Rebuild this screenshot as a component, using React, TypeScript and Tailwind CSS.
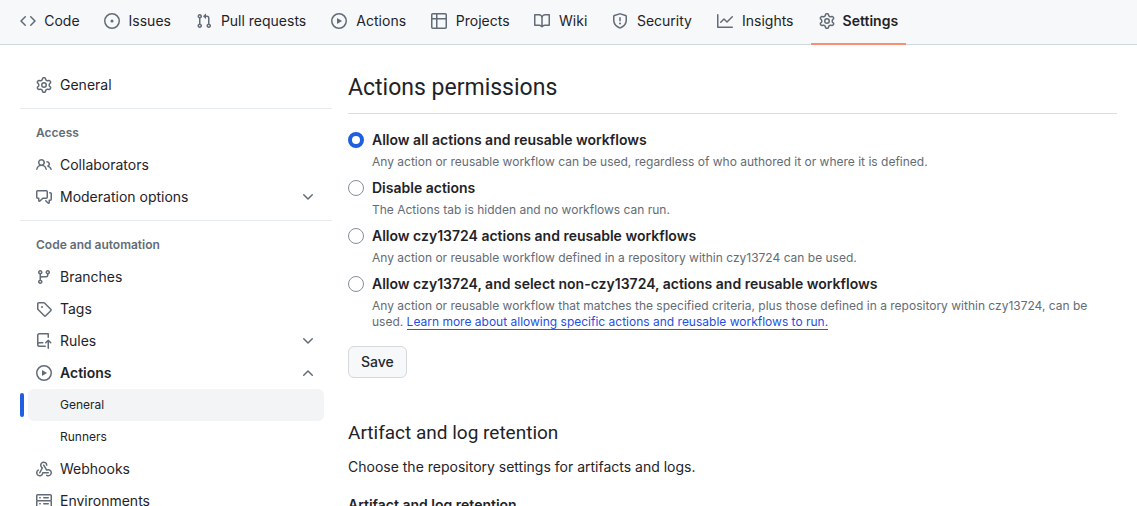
import { useState, type ReactNode } from "react";
import clsx from "clsx";

const paths = {
  code: "m11.28 3.22 4.25 4.25a.75.75 0 0 1 0 1.06l-4.25 4.25a.749.749 0 0 1-1.275-.326.749.749 0 0 1 .215-.734L13.94 8l-3.72-3.72a.749.749 0 0 1 .326-1.275.749.749 0 0 1 .734.215Zm-6.56 0a.751.751 0 0 1 1.042.018.751.751 0 0 1 .018 1.042L2.06 8l3.72 3.72a.749.749 0 0 1-.326 1.275.749.749 0 0 1-.734-.215L.47 8.53a.75.75 0 0 1 0-1.06Z",
  issue: "M8 9.5a1.5 1.5 0 1 0 0-3 1.5 1.5 0 0 0 0 3ZM8 0a8 8 0 1 1 0 16A8 8 0 0 1 8 0ZM1.5 8a6.5 6.5 0 1 0 13 0 6.5 6.5 0 0 0-13 0Z",
  pull: "M1.5 3.25a2.25 2.25 0 1 1 3 2.122v5.256a2.251 2.251 0 1 1-1.5 0V5.372A2.25 2.25 0 0 1 1.5 3.25Zm5.677-.177L9.573.677A.25.25 0 0 1 10 .854V2.5h1A2.5 2.5 0 0 1 13.5 5v5.628a2.251 2.251 0 1 1-1.5 0V5a1 1 0 0 0-1-1h-1v1.646a.25.25 0 0 1-.427.177L7.177 3.427a.25.25 0 0 1 0-.354ZM3.75 2.5a.75.75 0 1 0 0 1.5.75.75 0 0 0 0-1.5Zm0 9.5a.75.75 0 1 0 0 1.5.75.75 0 0 0 0-1.5Zm8.25.75a.75.75 0 1 0 1.5 0 .75.75 0 0 0-1.5 0Z",
  play: "M8 0a8 8 0 1 1 0 16A8 8 0 0 1 8 0ZM1.5 8a6.5 6.5 0 1 0 13 0 6.5 6.5 0 0 0-13 0Zm4.879-2.773 4.264 2.559a.25.25 0 0 1 0 .428l-4.264 2.559A.25.25 0 0 1 6 10.559V5.442a.25.25 0 0 1 .379-.215Z",
  table: "M0 1.75C0 .784.784 0 1.75 0h12.5C15.216 0 16 .784 16 1.75v12.5A1.75 1.75 0 0 1 14.25 16H1.75A1.75 1.75 0 0 1 0 14.25ZM6.5 6.5v8h7.75a.25.25 0 0 0 .25-.25V6.5Zm8-1.5V1.75a.25.25 0 0 0-.25-.25H6.5V5Zm-13 1.5v7.75c0 .138.112.25.25.25H5v-8ZM5 5V1.5H1.75a.25.25 0 0 0-.25.25V5Z",
  book: "M0 1.75A.75.75 0 0 1 .75 1h4.253c1.227 0 2.317.59 3 1.501A3.743 3.743 0 0 1 11.006 1h4.245a.75.75 0 0 1 .75.75v10.5a.75.75 0 0 1-.75.75h-4.507a2.25 2.25 0 0 0-1.591.659l-.622.621a.75.75 0 0 1-1.06 0l-.622-.621A2.25 2.25 0 0 0 5.258 13H.75a.75.75 0 0 1-.75-.75Zm7.251 10.324.004-5.073-.002-2.253A2.25 2.25 0 0 0 5.003 2.5H1.5v9h3.757a3.75 3.75 0 0 1 1.994.574ZM8.755 4.75l-.004 7.322a3.752 3.752 0 0 1 1.992-.572H14.5v-9h-3.495a2.25 2.25 0 0 0-2.25 2.25Z",
  shield: "M7.467.133a1.748 1.748 0 0 1 1.066 0l5.25 1.68A1.75 1.75 0 0 1 15 3.48V7c0 1.566-.32 3.182-1.303 4.682-.983 1.498-2.585 2.813-5.032 3.855a1.697 1.697 0 0 1-1.33 0c-2.447-1.042-4.049-2.357-5.032-3.855C1.32 10.182 1 8.566 1 7V3.48a1.75 1.75 0 0 1 1.217-1.667Zm.61 1.429a.25.25 0 0 0-.153 0l-5.25 1.68a.25.25 0 0 0-.174.238V7c0 1.358.275 2.666 1.057 3.86.784 1.194 2.121 2.34 4.366 3.297a.196.196 0 0 0 .154 0c2.245-.956 3.582-2.104 4.366-3.298C13.225 9.666 13.5 8.36 13.5 7V3.48a.251.251 0 0 0-.174-.237l-5.25-1.68ZM8.75 4.75v3a.75.75 0 0 1-1.5 0v-3a.75.75 0 0 1 1.5 0ZM9 10.5a1 1 0 1 1-2 0 1 1 0 0 1 2 0Z",
  graph: "M1.5 1.75V13.5h13.75a.75.75 0 0 1 0 1.5H.75a.75.75 0 0 1-.75-.75V1.75a.75.75 0 0 1 1.5 0Zm14.28 2.53-5.25 5.25a.75.75 0 0 1-1.06 0L7 7.06 4.28 9.78a.751.751 0 0 1-1.042-.018.751.751 0 0 1-.018-1.042l3.25-3.25a.75.75 0 0 1 1.06 0L10 7.94l4.72-4.72a.751.751 0 0 1 1.042.018.751.751 0 0 1 .018 1.042Z",
  gear: "M8 0a8.2 8.2 0 0 1 .701.031C9.444.095 9.99.645 10.16 1.29l.288 1.107c.018.066.079.158.212.224.231.114.454.243.668.386.123.082.233.09.299.071l1.103-.303c.644-.176 1.392.021 1.82.63.27.385.506.792.704 1.218.315.675.111 1.422-.364 1.891l-.814.806c-.049.048-.098.147-.088.294.016.257.016.515 0 .772-.01.147.038.246.088.294l.814.806c.475.469.679 1.216.364 1.891a7.977 7.977 0 0 1-.704 1.217c-.428.61-1.176.807-1.82.63l-1.102-.302c-.067-.019-.177-.011-.3.071a5.909 5.909 0 0 1-.668.386c-.133.066-.194.158-.211.224l-.29 1.106c-.168.646-.715 1.196-1.458 1.26a8.006 8.006 0 0 1-1.402 0c-.743-.064-1.289-.614-1.458-1.26l-.289-1.106c-.018-.066-.079-.158-.212-.224a5.738 5.738 0 0 1-.668-.386c-.123-.082-.233-.09-.299-.071l-1.103.303c-.644.176-1.392-.021-1.82-.63a8.12 8.12 0 0 1-.704-1.218c-.315-.675-.111-1.422.363-1.891l.815-.806c.05-.048.098-.147.088-.294a6.214 6.214 0 0 1 0-.772c.01-.147-.038-.246-.088-.294l-.815-.806C.635 6.045.431 5.298.746 4.623a7.92 7.92 0 0 1 .704-1.217c.428-.61 1.176-.807 1.82-.63l1.102.302c.067.019.177.011.3-.071.214-.143.437-.272.668-.386.133-.066.194-.158.211-.224l.29-1.106C6.009.645 6.556.095 7.299.03 7.53.01 7.764 0 8 0Zm-.571 1.525c-.036.003-.108.036-.137.146l-.289 1.105c-.147.561-.549.967-.998 1.189-.173.086-.34.183-.5.29-.417.278-.97.423-1.529.27l-1.103-.303c-.109-.03-.175.016-.195.045-.22.312-.412.644-.573.99-.014.031-.021.11.059.19l.815.806c.411.406.562.957.53 1.456a4.709 4.709 0 0 0 0 .582c.032.499-.119 1.05-.53 1.456l-.815.806c-.081.08-.073.159-.059.19.162.346.353.677.573.989.02.03.085.076.195.046l1.102-.303c.56-.153 1.113-.008 1.53.27.161.107.328.204.501.29.447.222.85.629.997 1.189l.289 1.105c.029.109.101.143.137.146a6.6 6.6 0 0 0 1.142 0c.036-.003.108-.036.137-.146l.289-1.105c.147-.561.549-.967.998-1.189.173-.086.34-.183.5-.29.417-.278.97-.423 1.529-.27l1.103.303c.109.029.175-.016.195-.045.22-.313.411-.644.573-.99.014-.031.021-.11-.059-.19l-.815-.806c-.411-.406-.562-.957-.53-1.456a4.709 4.709 0 0 0 0-.582c-.032-.499.119-1.05.53-1.456l.815-.806c.081-.08.073-.159.059-.19a6.464 6.464 0 0 0-.573-.989c-.02-.03-.085-.076-.195-.046l-1.102.303c-.56.153-1.113.008-1.53-.27a4.44 4.44 0 0 0-.501-.29c-.447-.222-.85-.629-.997-1.189l-.289-1.105c-.029-.11-.101-.143-.137-.146a6.6 6.6 0 0 0-1.142 0ZM11 8a3 3 0 1 1-6 0 3 3 0 0 1 6 0ZM9.5 8a1.5 1.5 0 1 0-3.001.001A1.5 1.5 0 0 0 9.5 8Z",
  people: "M2 5.5a3.5 3.5 0 1 1 5.898 2.549 5.508 5.508 0 0 1 3.034 4.084.75.75 0 1 1-1.482.235 4 4 0 0 0-7.9 0 .75.75 0 0 1-1.482-.236A5.507 5.507 0 0 1 3.102 8.05 3.493 3.493 0 0 1 2 5.5ZM11 4a3.001 3.001 0 0 1 2.22 5.018 5.01 5.01 0 0 1 2.56 3.012.749.749 0 0 1-.885.954.752.752 0 0 1-.549-.514 3.507 3.507 0 0 0-2.522-2.372.75.75 0 0 1-.574-.73v-.352a.75.75 0 0 1 .416-.672A1.5 1.5 0 0 0 11 5.5.75.75 0 0 1 11 4Zm-5.5-.5a2 2 0 1 0-.001 3.999A2 2 0 0 0 5.5 3.5Z",
  discussion: "M1.75 1h8.5c.966 0 1.75.784 1.75 1.75v5.5A1.75 1.75 0 0 1 10.25 10H7.061l-2.574 2.573A1.458 1.458 0 0 1 2 11.543V10h-.25A1.75 1.75 0 0 1 0 8.25v-5.5C0 1.784.784 1 1.75 1ZM1.5 2.75v5.5c0 .138.112.25.25.25h1a.75.75 0 0 1 .75.75v2.19l2.72-2.72a.749.749 0 0 1 .53-.22h3.5a.25.25 0 0 0 .25-.25v-5.5a.25.25 0 0 0-.25-.25h-8.5a.25.25 0 0 0-.25.25Zm13 2a.25.25 0 0 0-.25-.25h-.5a.75.75 0 0 1 0-1.5h.5c.966 0 1.75.784 1.75 1.75v5.5A1.75 1.75 0 0 1 14.25 12H14v1.543a1.458 1.458 0 0 1-2.487 1.03L9.22 12.28a.749.749 0 0 1 .326-1.275.749.749 0 0 1 .734.215l2.22 2.22v-2.19a.75.75 0 0 1 .75-.75h1a.25.25 0 0 0 .25-.25Z",
  branch: "M9.5 3.25a2.25 2.25 0 1 1 3 2.122V6A2.5 2.5 0 0 1 10 8.5H6a1 1 0 0 0-1 1v1.128a2.251 2.251 0 1 1-1.5 0V5.372a2.25 2.25 0 1 1 1.5 0v1.836A2.493 2.493 0 0 1 6 7h4a1 1 0 0 0 1-1v-.628A2.25 2.25 0 0 1 9.5 3.25Zm-6 0a.75.75 0 1 0 1.5 0 .75.75 0 0 0-1.5 0Zm8.25-.75a.75.75 0 1 0 0 1.5.75.75 0 0 0 0-1.5ZM4.25 12a.75.75 0 1 0 0 1.5.75.75 0 0 0 0-1.5Z",
  tag: "M1 7.775V2.75C1 1.784 1.784 1 2.75 1h5.025c.464 0 .91.184 1.238.513l6.25 6.25a1.75 1.75 0 0 1 0 2.474l-5.026 5.026a1.75 1.75 0 0 1-2.474 0l-6.25-6.25A1.752 1.752 0 0 1 1 7.775Zm1.5 0c0 .066.026.13.073.177l6.25 6.25a.25.25 0 0 0 .354 0l5.025-5.025a.25.25 0 0 0 0-.354l-6.25-6.25a.25.25 0 0 0-.177-.073H2.75a.25.25 0 0 0-.25.25ZM6 5a1 1 0 1 1 0 2 1 1 0 0 1 0-2Z",
  push: "M1 2.5A2.5 2.5 0 0 1 3.5 0h8.75a.75.75 0 0 1 .75.75v3.5a.75.75 0 0 1-1.5 0V1.5h-8a1 1 0 0 0-1 1v6.708A2.493 2.493 0 0 1 3.5 9h3.25a.75.75 0 0 1 0 1.5H3.5a1 1 0 0 0 0 2h5.75a.75.75 0 0 1 0 1.5H3.5A2.5 2.5 0 0 1 1 11.5Zm13.23 7.79-1.224-1.224v6.184a.75.75 0 0 1-1.5 0V9.066L10.28 10.29a.75.75 0 0 1-1.06-1.061l2.505-2.504a.75.75 0 0 1 1.06 0L15.29 9.23a.751.751 0 0 1-.018 1.042.751.751 0 0 1-1.042.018Z",
  webhook: "M5.5 4.25a2.25 2.25 0 0 1 4.5 0 .75.75 0 0 0 1.5 0 3.75 3.75 0 1 0-6.14 2.889l-2.272 4.258a.75.75 0 0 0 1.324.706L7 7.25a.75.75 0 0 0-.309-1.015A2.25 2.25 0 0 1 5.5 4.25Z M7.364 3.607a.75.75 0 0 1 1.03.257l2.608 4.349a3.75 3.75 0 1 1-.628 6.785.75.75 0 0 1 .752-1.299 2.25 2.25 0 1 0-.033-3.88.75.75 0 0 1-1.03-.256L7.107 4.636a.75.75 0 0 1 .257-1.03Z M2.9 8.776A.75.75 0 0 1 2.625 9.8 2.25 2.25 0 1 0 6 11.75a.75.75 0 0 1 .75-.751h5.5a.75.75 0 0 1 0 1.5H7.425a3.751 3.751 0 1 1-5.55-3.998.75.75 0 0 1 1.024.274Z",
  server: "M1.75 1h12.5c.966 0 1.75.784 1.75 1.75v4c0 .372-.116.717-.314 1 .198.283.314.628.314 1v4a1.75 1.75 0 0 1-1.75 1.75H1.75A1.75 1.75 0 0 1 0 12.75v-4c0-.358.109-.707.314-1a1.739 1.739 0 0 1-.314-1v-4C0 1.784.784 1 1.75 1ZM1.5 2.75v4c0 .138.112.25.25.25h12.5a.25.25 0 0 0 .25-.25v-4a.25.25 0 0 0-.25-.25H1.75a.25.25 0 0 0-.25.25Zm.25 5.75a.25.25 0 0 0-.25.25v4c0 .138.112.25.25.25h12.5a.25.25 0 0 0 .25-.25v-4a.25.25 0 0 0-.25-.25ZM7 4.75A.75.75 0 0 1 7.75 4h4.5a.75.75 0 0 1 0 1.5h-4.5A.75.75 0 0 1 7 4.75ZM7.75 10h4.5a.75.75 0 0 1 0 1.5h-4.5a.75.75 0 0 1 0-1.5ZM3 4.75A.75.75 0 0 1 3.75 4h.5a.75.75 0 0 1 0 1.5h-.5A.75.75 0 0 1 3 4.75ZM3.75 10h.5a.75.75 0 0 1 0 1.5h-.5a.75.75 0 0 1 0-1.5Z",
  chevron: "M12.78 5.22a.749.749 0 0 1 0 1.06l-4.25 4.25a.749.749 0 0 1-1.06 0L3.22 6.28a.749.749 0 1 1 1.06-1.06L8 8.939l3.72-3.719a.749.749 0 0 1 1.06 0Z",
};

type IconName = keyof typeof paths;

function Icon({ name, className }: { name: IconName; className?: string }) {
  return (
    <svg viewBox="0 0 16 16" aria-hidden="true" className={clsx("size-4 shrink-0 fill-[#636c76]", className)}>
      <path d={paths[name]} />
    </svg>
  );
}

const tabs: { icon: IconName; label: string }[] = [
  { icon: "code", label: "Code" },
  { icon: "issue", label: "Issues" },
  { icon: "pull", label: "Pull requests" },
  { icon: "play", label: "Actions" },
  { icon: "table", label: "Projects" },
  { icon: "book", label: "Wiki" },
  { icon: "shield", label: "Security" },
  { icon: "graph", label: "Insights" },
  { icon: "gear", label: "Settings" },
];

function RepoNav() {
  return (
    <nav aria-label="Repository" className="border-b border-[#d0d7de] bg-[#f6f8fa] px-3">
      <ul className="flex gap-2">
        {tabs.map(({ icon, label }) => {
          const current = label === "Settings";
          return (
            <li key={label} className="relative pt-[5px] pb-[7px]">
              <a
                href="#"
                aria-current={current ? "page" : undefined}
                className={clsx("flex h-8 items-center gap-2 rounded-md px-2 whitespace-nowrap", current && "font-semibold")}
              >
                <Icon name={icon} />
                {/* The hidden bold copy keeps a tab's width the same when it is selected. */}
                <span
                  data-label={label}
                  className="text-center after:invisible after:block after:h-0 after:overflow-hidden after:font-semibold after:content-[attr(data-label)]"
                >
                  {label}
                </span>
              </a>
              {current && <span className="absolute inset-x-0 -bottom-px h-0.5 bg-[#fd8c73]" />}
            </li>
          );
        })}
      </ul>
    </nav>
  );
}

function SideLink({ icon, children }: { icon: IconName; children: ReactNode }) {
  return (
    <li>
      <a href="#" className="mx-2 flex h-8 items-center gap-2 rounded-md px-2">
        <Icon name={icon} />
        {children}
      </a>
    </li>
  );
}

function SideGroup({ icon, label, open = false, children }: { icon: IconName; label: string; open?: boolean; children?: ReactNode }) {
  const [expanded, setExpanded] = useState(open);
  return (
    <li>
      <div className="px-2">
        <button
          type="button"
          aria-expanded={expanded}
          onClick={() => setExpanded(!expanded)}
          className={clsx("flex h-8 w-full items-center gap-2 rounded-md px-2 text-left", open && "font-semibold")}
        >
          <Icon name={icon} />
          <span className="grow">{label}</span>
          <Icon name="chevron" className={expanded ? "rotate-180" : undefined} />
        </button>
      </div>
      {expanded && children}
    </li>
  );
}

function SideHeading({ children }: { children: ReactNode }) {
  return <h3 className="flex h-8 items-center px-4 text-xs font-semibold text-[#636c76]">{children}</h3>;
}

function Sidebar() {
  return (
    <nav aria-label="Settings" className="w-[312px] shrink-0">
      <ul>
        <SideLink icon="gear">General</SideLink>
      </ul>
      <hr className="mt-[7px] mb-2 border-[#e7eaee]" />
      <SideHeading>Access</SideHeading>
      <ul>
        <SideLink icon="people">Collaborators</SideLink>
        <SideGroup icon="discussion" label="Moderation options" />
      </ul>
      <hr className="mt-[7px] mb-2 border-[#e7eaee]" />
      <SideHeading>Code and automation</SideHeading>
      <ul>
        <SideLink icon="branch">Branches</SideLink>
        <SideLink icon="tag">Tags</SideLink>
        <SideGroup icon="push" label="Rules" />
        <SideGroup icon="play" label="Actions" open>
          <ul className="text-xs">
            <li className="flex items-center gap-1">
              <span className="h-6 w-1 rounded-md bg-[#1f5fe0]" />
              <a href="#" aria-current="page" className="mr-2 flex h-8 grow items-center rounded-md bg-[#f3f4f6] px-8">
                General
              </a>
            </li>
            <li>
              <a href="#" className="mx-2 flex h-8 items-center rounded-md px-8">
                Runners
              </a>
            </li>
          </ul>
        </SideGroup>
        <SideLink icon="webhook">Webhooks</SideLink>
        <SideLink icon="server">Environments</SideLink>
      </ul>
    </nav>
  );
}

const policies: { id: string; label: string; note: ReactNode }[] = [
  {
    id: "all",
    label: "Allow all actions and reusable workflows",
    note: "Any action or reusable workflow can be used, regardless of who authored it or where it is defined.",
  },
  {
    id: "disabled",
    label: "Disable actions",
    note: "The Actions tab is hidden and no workflows can run.",
  },
  {
    id: "local",
    label: "Allow czy13724 actions and reusable workflows",
    note: "Any action or reusable workflow defined in a repository within czy13724 can be used.",
  },
  {
    id: "select",
    label: "Allow czy13724, and select non-czy13724, actions and reusable workflows",
    note: (
      <>
        Any action or reusable workflow that matches the specified criteria, plus those defined in a repository within
        czy13724, can be used.{" "}
        <a href="#" className="border-b border-[#1f5fe0] text-[#1f4fe0]">
          Learn more about allowing specific actions and reusable workflows to run.
        </a>
      </>
    ),
  },
];

function Permissions() {
  const [policy, setPolicy] = useState("all");
  return (
    <form onSubmit={(e) => e.preventDefault()}>
      <h2 id="permissions" className="border-b border-[#d8dee4] pt-px pb-[7px] font-['Roboto',sans-serif] text-[23px] leading-9">
        Actions permissions
      </h2>
      <fieldset aria-labelledby="permissions" className="mt-4 flex flex-col gap-2">
        {policies.map(({ id, label, note }) => (
          <div key={id} className="flex gap-2">
            <input
              type="radio"
              id={id}
              name="policy"
              checked={policy === id}
              onChange={() => setPolicy(id)}
              aria-describedby={`${id}-note`}
              className="mt-0.5 size-4 shrink-0 appearance-none rounded-full border border-[#868f99] bg-white checked:border-4 checked:border-[#1f5fe0]"
            />
            <div>
              <label htmlFor={id} className="block leading-5 font-semibold">
                {label}
              </label>
              <p id={`${id}-note`} className="mt-1 text-xs leading-4 text-[#636c76]">
                {note}
              </p>
            </div>
          </div>
        ))}
      </fieldset>
      <button
        type="submit"
        className="mt-4 h-8 rounded-md border border-[#d5d8dc] bg-[#f6f8fa] px-3 font-medium text-[#24292f]"
      >
        Save
      </button>
    </form>
  );
}

function Retention() {
  return (
    <section className="mt-10">
      <h2 className="font-['Roboto',sans-serif] text-[19px] leading-[30px]">Artifact and log retention</h2>
      <p className="mt-2 leading-[22px]">Choose the repository settings for artifacts and logs.</p>
      <h3 className="mt-4 leading-[22px] font-semibold">Artifact and log retention</h3>
    </section>
  );
}

export default function App() {
  return (
    <div className="min-h-screen bg-white font-['Inter',sans-serif] text-sm text-[#1f2328]">
      <RepoNav />
      <div className="flex gap-4 px-5 pt-6">
        <Sidebar />
        <main className="min-w-0 grow">
          <Permissions />
          <Retention />
        </main>
      </div>
    </div>
  );
}
